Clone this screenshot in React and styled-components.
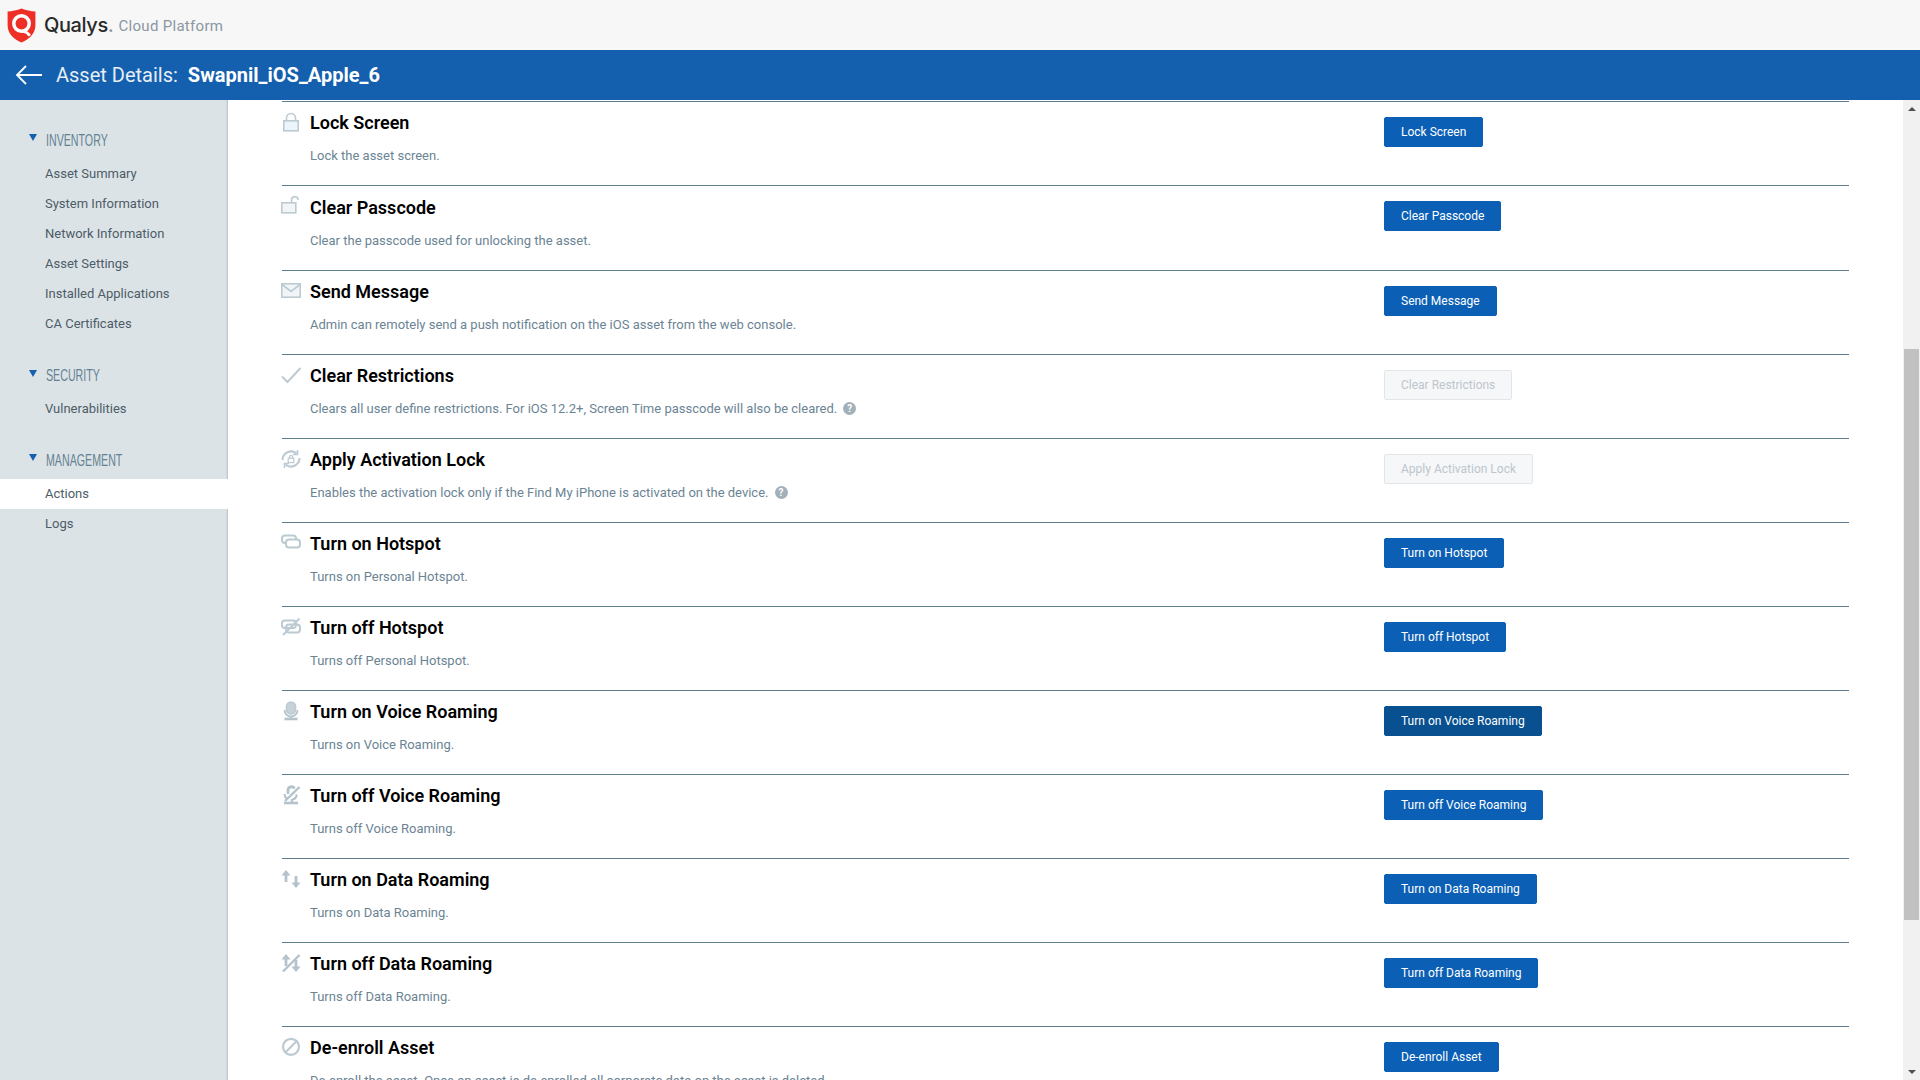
import React from 'react';
import styled, { createGlobalStyle } from 'styled-components';

const ROW_HEIGHT = 84;

const GlobalStyle = createGlobalStyle`
  html, body {
    margin: 0;
    height: 100%;
    overflow: hidden;
    background: #fff;
    font-family: Roboto, "Liberation Sans", sans-serif;
  }
`;

const Page = styled.div`
  display: flex;
  flex-direction: column;
  width: 1920px;
  height: 1080px;
  overflow: hidden;
`;

const TopBar = styled.header`
  display: flex;
  align-items: center;
  height: 50px;
  padding-left: 7px;
  background: #f7f7f7;
`;

const Brand = styled.span`
  margin-left: 8px;
  font-family: Inter, sans-serif;
  font-size: 20px;
  font-weight: 500;
  letter-spacing: -0.4px;
  color: #2a2a2a;
`;

const BrandDot = styled.span`
  color: #8c96a3;
`;

const Product = styled.span`
  margin-left: 5px;
  margin-top: 2px;
  font-size: 15px;
  letter-spacing: 0.3px;
  color: #8c96a3;
`;

const TitleBar = styled.div`
  display: flex;
  align-items: center;
  height: 50px;
  padding-left: 15px;
  background: #1460ae;
  color: #e6eef6;
  font-size: 20px;
`;

const Title = styled.span`
  margin-left: 13px;
`;

const TitleName = styled.strong`
  margin-left: 10px;
  font-weight: 700;
  color: #fff;
`;

const Body = styled.div`
  display: flex;
  flex: 1;
  min-height: 0;
`;

const Sidebar = styled.nav`
  flex: none;
  width: 228px;
  padding-top: 24px;
  box-sizing: border-box;
  background: #dce3e6;
  box-shadow: inset -2px 0 2px -1px #b4c0c8;
`;

const Section = styled.section`
  margin-bottom: 20.5px;
`;

const SectionHead = styled.div`
  display: flex;
  align-items: center;
  height: 30px;
  margin-bottom: ${(props) => props.$gap}px;
  padding-left: 29px;
  font-family: "Liberation Sans", sans-serif;
  font-size: 15px;
  color: #648194;
`;

const SectionName = styled.span`
  display: inline-block;
  transform: scale(0.71, 1.12);
  transform-origin: left center;
`;

const Caret = styled.span`
  width: 0;
  height: 0;
  margin-right: 9px;
  margin-top: -3px;
  border-left: 4px solid transparent;
  border-right: 4px solid transparent;
  border-top: 7px solid #1460ae;
`;

const NavItem = styled.div`
  height: 30px;
  padding-left: 45px;
  line-height: 30px;
  font-size: 13px;
  color: #4c5c68;
  background: ${(props) => (props.$active ? '#fff' : 'transparent')};
`;

const Main = styled.main`
  flex: 1;
  min-width: 0;
  padding: 1px 54px 0 54px;
  overflow: hidden;
`;

const IconSlot = styled.div`
  flex: none;
  width: 28px;
  padding-top: 10px;
  margin-left: -1px;
  margin-right: 1px;
`;

const RowText = styled.div`
  flex: none;
  width: 1074px;
  padding-top: 9px;
`;

const Row = styled.div`
  display: flex;
  box-sizing: border-box;
  height: ${ROW_HEIGHT}px;
  border-top: 1px solid #5e7d91;

  &:first-child {
    height: ${ROW_HEIGHT + 0.4375}px;
  }

  &:nth-child(2) {
    height: ${ROW_HEIGHT + 0.5625}px;
  }

  &:nth-child(2) ${RowText} {
    padding-top: 9.6px;
  }
`;

const RowTitle = styled.div`
  height: 24px;
  line-height: 24px;
  font-size: 18px;
  font-weight: 600;
  color: #000;
`;

const RowDesc = styled.div`
  display: flex;
  align-items: center;
  height: 18px;
  margin-top: 11px;
  font-size: 13px;
  color: #6b8494;
`;

const Help = styled.span`
  display: inline-flex;
  align-items: center;
  justify-content: center;
  width: 13px;
  height: 13px;
  margin-left: 6px;
  border-radius: 50%;
  background: #a2b0b9;
  color: #fff;
  font-size: 10px;
  font-weight: 700;
`;

const ActionButton = styled.button`
  align-self: flex-start;
  height: 30px;
  margin-top: 15px;
  padding: 0 16px;
  box-sizing: border-box;
  border: 1px solid ${(props) => (props.disabled ? '#e2e6e9' : props.$hover ? '#08508f' : '#0b5fb5')};
  border-radius: 2px;
  background: ${(props) => (props.disabled ? '#f6f7f8' : props.$hover ? '#08508f' : '#0b5fb5')};
  color: ${(props) => (props.disabled ? '#bcc6cc' : '#fff')};
  font-family: Roboto, sans-serif;
  font-size: 12px;
  font-weight: 400;
  white-space: nowrap;
`;

const Rail = styled.div`
  display: flex;
  flex-direction: column;
  flex: none;
  width: 17px;
  box-sizing: border-box;
  padding: 0 1px;
  background: #f1f1f1;
`;

const RailArrow = styled.div`
  display: flex;
  align-items: center;
  justify-content: center;
  height: 17px;
  flex: none;
`;

const ArrowUp = styled.span`
  border-left: 4px solid transparent;
  border-right: 4px solid transparent;
  border-bottom: 4px solid #505050;
`;

const ArrowDown = styled.span`
  border-left: 4px solid transparent;
  border-right: 4px solid transparent;
  border-top: 4px solid #505050;
`;

const RailGap = styled.div`
  flex: ${(props) => props.$grow};
`;

const Thumb = styled.div`
  flex: none;
  height: 571px;
  background: #c1c1c1;
`;

const Svg = styled.svg`
  display: block;
  fill: none;
  stroke: #bccad2;
  stroke-width: 1.6;
`;

const Icon = ({ children }) => (
  <Svg width="20" height="20" viewBox="0 0 20 20">{children}</Svg>
);

const icons = {
  lock: (
    <>
      <rect x="2.8" y="8.8" width="14.4" height="10" fill="#eef5fa" />
      <path d="M5.5 8.500V6a4.500 4.500 0 0 1 9 0v2.500" />
    </>
  ),
  unlock: (
    <>
      <rect x="0.8" y="6.800" width="14" height="10" fill="#f1f5f8" />
      <path d="M10.500 6.500V4a3.300 3.300 0 0 1 6.600 0" />
    </>
  ),
  mail: (
    <>
      <rect x="0.8" y="2.800" width="18.400" height="13.400" fill="#f1f5f8" />
      <path d="M1 3.500 10 10.500l9-7" />
    </>
  ),
  check: <path d="M1 11.500 6.500 17 19.500 3" strokeWidth="2" />,
  activation: (
    <>
      <path d="M1.500 11a8.500 8.500 0 0 1 14-6.500" strokeWidth="2" />
      <path d="M18.500 9a8.500 8.500 0 0 1-14 6.500" strokeWidth="2" />
      <path d="M16.500 1v4.500H12M3.500 19v-4.500H8" strokeWidth="1.600" />
      <rect x="7.200" y="9.200" width="5.600" height="4.400" strokeWidth="1.200" />
      <path d="M8.500 9V7.800a1.500 1.500 0 0 1 3 0V9" strokeWidth="1.200" />
    </>
  ),
  hotspot: (
    <>
      <rect x="1" y="2.500" width="14" height="7.500" rx="3" strokeWidth="2" />
      <rect x="5" y="6.500" width="14" height="8" rx="3" strokeWidth="2" fill="#fff" />
    </>
  ),
  hotspotOff: (
    <>
      <rect x="1" y="3.500" width="14" height="7.500" rx="3" strokeWidth="2" />
      <rect x="5" y="7.500" width="14" height="8" rx="3" strokeWidth="2" />
      <path d="M18.500 1.500 2 18" strokeWidth="2" />
    </>
  ),
  mic: (
    <>
      <rect x="5.500" y="1" width="9" height="12" rx="4.500" fill="#c6d1d8" />
      <path d="M3.500 9a6.500 6.500 0 0 0 13 0M10 15.500v2" strokeWidth="1.800" stroke="#b3c2cb" />
      <path d="M3.500 18h13" strokeWidth="2.600" stroke="#b3c2cb" />
    </>
  ),
  micOff: (
    <>
      <path d="M7 9V5a3.500 3.500 0 0 1 6.500-1.500" strokeWidth="2.800" stroke="#b3c2cb" />
      <path d="M3.500 9a6.500 6.500 0 0 0 2 4.500M15.800 9.500a6.500 6.500 0 0 1-5 5.500v2" strokeWidth="2" stroke="#b3c2cb" />
      <path d="M3 18h14" strokeWidth="2.600" stroke="#b3c2cb" />
      <path d="M18.500 2 4 16" strokeWidth="2.400" stroke="#b3c2cb" />
    </>
  ),
  data: (
    <>
      <path d="M5 5v8M15 7v8" strokeWidth="2.800" stroke="#b3c2cb" />
      <path d="M0.500 6.500 5 1l4.500 5.500zM10.500 13.500 15 19l4.500-5.500z" fill="#b3c2cb" strokeWidth="0" />
    </>
  ),
  dataOff: (
    <>
      <path d="M5 5v8M15 7v8" strokeWidth="2.800" stroke="#b3c2cb" />
      <path d="M0.500 6.500 5 1l4.500 5.500zM10.500 13.500 15 19l4.500-5.500z" fill="#b3c2cb" strokeWidth="0" />
      <path d="M18.500 2 2 18.500" strokeWidth="2.400" stroke="#b3c2cb" />
    </>
  ),
  block: (
    <>
      <circle cx="10" cy="9.800" r="8" strokeWidth="2.200" />
      <path d="M4.500 15.300 15.500 4.300" strokeWidth="2.200" />
    </>
  ),
};

const navSections = [
  { name: 'INVENTORY', gap: 5, items: ['Asset Summary', 'System Information', 'Network Information', 'Asset Settings', 'Installed Applications', 'CA Certificates'] },
  { name: 'SECURITY', gap: 4, items: ['Vulnerabilities'] },
  { name: 'MANAGEMENT', gap: 5, items: ['Actions', 'Logs'] },
];

const actions = [
  { icon: 'lock', title: 'Lock Screen', desc: 'Lock the asset screen.' },
  { icon: 'unlock', title: 'Clear Passcode', desc: 'Clear the passcode used for unlocking the asset.' },
  { icon: 'mail', title: 'Send Message', desc: 'Admin can remotely send a push notification on the iOS asset from the web console.' },
  { icon: 'check', title: 'Clear Restrictions', desc: 'Clears all user define restrictions. For iOS 12.2+, Screen Time passcode will also be cleared.', help: true, disabled: true },
  { icon: 'activation', title: 'Apply Activation Lock', desc: 'Enables the activation lock only if the Find My iPhone is activated on the device.', help: true, disabled: true },
  { icon: 'hotspot', title: 'Turn on Hotspot', desc: 'Turns on Personal Hotspot.' },
  { icon: 'hotspotOff', title: 'Turn off Hotspot', desc: 'Turns off Personal Hotspot.' },
  { icon: 'mic', title: 'Turn on Voice Roaming', desc: 'Turns on Voice Roaming.', hover: true },
  { icon: 'micOff', title: 'Turn off Voice Roaming', desc: 'Turns off Voice Roaming.' },
  { icon: 'data', title: 'Turn on Data Roaming', desc: 'Turns on Data Roaming.' },
  { icon: 'dataOff', title: 'Turn off Data Roaming', desc: 'Turns off Data Roaming.' },
  { icon: 'block', title: 'De-enroll Asset', desc: 'De-enroll the asset. Once an asset is de-enrolled all corporate data on the asset is deleted.' },
];

const Logo = () => (
  <svg width="29" height="35" viewBox="0 0 28 34">
    <path d="M14 0.500C18.500 2.500 23 3 27.500 3.500V17C27.500 25 21 30.500 14 33.500C7 30.500 0.500 25 0.500 17V3.500C5 3 9.500 2.500 14 0.500Z" fill="#ee2f27" />
    <circle cx="14" cy="15" r="7.500" fill="none" stroke="#fff" strokeWidth="3.400" />
    <path d="M15 22.500C18 23 20.500 24.500 22 27" fill="none" stroke="#fff" strokeWidth="2.600" />
  </svg>
);

const App = () => (
  <Page>
    <GlobalStyle />
    <TopBar>
      <Logo />
      <Brand>Qualys<BrandDot>.</BrandDot></Brand>
      <Product>Cloud Platform</Product>
    </TopBar>
    <TitleBar>
      <svg width="28" height="22" viewBox="0 0 28 22" fill="none" stroke="#fff" strokeWidth="1.800">
        <path d="M27 11H2M11 2l-9 9 9 9" />
      </svg>
      <Title>Asset Details:</Title>
      <TitleName>Swapnil_iOS_Apple_6</TitleName>
    </TitleBar>
    <Body>
      <Sidebar>
        {navSections.map((section) => (
          <Section key={section.name}>
            <SectionHead $gap={section.gap}><Caret /><SectionName>{section.name}</SectionName></SectionHead>
            {section.items.map((item) => (
              <NavItem key={item} $active={item === 'Actions'}>{item}</NavItem>
            ))}
          </Section>
        ))}
      </Sidebar>
      <Main>
        {actions.map((action) => (
          <Row key={action.title}>
            <IconSlot><Icon>{icons[action.icon]}</Icon></IconSlot>
            <RowText>
              <RowTitle>{action.title}</RowTitle>
              <RowDesc>
                {action.desc}
                {action.help && <Help>?</Help>}
              </RowDesc>
            </RowText>
            <ActionButton disabled={action.disabled} $hover={action.hover}>{action.title}</ActionButton>
          </Row>
        ))}
      </Main>
      <Rail>
        <RailArrow><ArrowUp /></RailArrow>
        <RailGap $grow={232} />
        <Thumb />
        <RailGap $grow={143} />
        <RailArrow><ArrowDown /></RailArrow>
      </Rail>
    </Body>
  </Page>
);

export default App;
